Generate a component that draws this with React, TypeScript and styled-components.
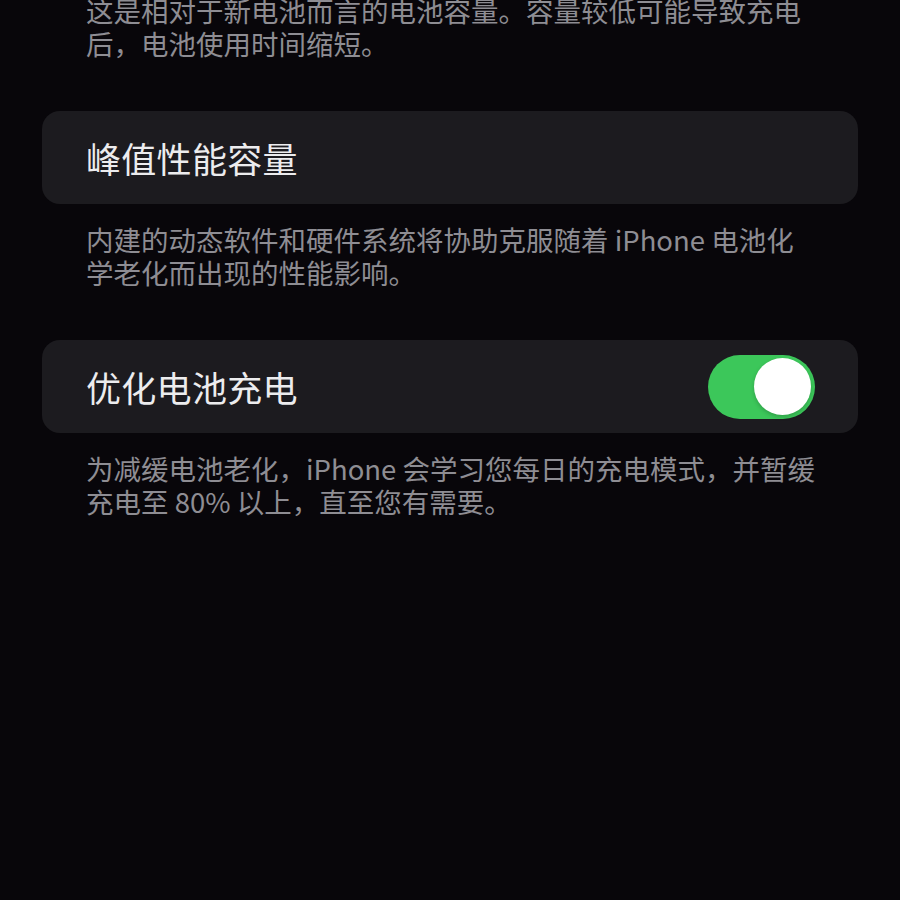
import styled, { createGlobalStyle } from "styled-components";

const GlobalStyle = createGlobalStyle`
  html, body {
    margin: 0;
    padding: 0;
    background: #08060a;
  }
  body {
    font-family: "Noto Sans CJK SC", "Noto Sans", sans-serif;
    width: 900px;
    height: 900px;
    overflow: hidden;
  }
`;

interface SectionProps {
  title?: string;
  toggle?: boolean;
  lines: string[];
}

const sections: SectionProps[] = [
  {
    lines: ["这是相对于新电池而言的电池容量。容量较低可能导致充电", "后，电池使用时间缩短。"],
  },
  {
    title: "峰值性能容量",
    lines: ["内建的动态软件和硬件系统将协助克服随着 iPhone 电池化", "学老化而出现的性能影响。"],
  },
  {
    title: "优化电池充电",
    toggle: true,
    lines: ["为减缓电池老化，iPhone 会学习您每日的充电模式，并暂缓", "充电至 80% 以上，直至您有需要。"],
  },
];

const App = () => {
  return (
    <>
      <GlobalStyle />
      <Page>
        {sections.map((s, i) => (
          <Section key={i} $first={i === 0}>
            {s.title && (
              <Card>
                <CardTitle>{s.title}</CardTitle>
                {s.toggle && (
                  <Switch>
                    <Knob />
                  </Switch>
                )}
              </Card>
            )}
            <Caption>
              {s.lines.map((l) => (
                <Line key={l}>{l}</Line>
              ))}
            </Caption>
          </Section>
        ))}
      </Page>
    </>
  );
};

const Page = styled.div`
  display: flex;
  flex-direction: column;
  gap: 52px;
  padding: 0 42px;
  margin-top: -6px;
`;

const Section = styled.div<{ $first: boolean }>`
  display: flex;
  flex-direction: column;
  gap: 19px;
`;

const Card = styled.div`
  height: 93px;
  border-radius: 18px;
  background: #1c1b1f;
  display: flex;
  align-items: center;
  justify-content: space-between;
  padding: 0 43px 0 44px;
`;

const CardTitle = styled.div`
  font-size: 35px;
  color: #ececee;
  letter-spacing: 0.3px;
`;

const Switch = styled.div`
  width: 107px;
  height: 64px;
  border-radius: 32px;
  background: #3cc75a;
  display: flex;
  align-items: center;
  justify-content: flex-end;
  padding: 0 4px;
  box-sizing: border-box;
`;

const Knob = styled.div`
  width: 57px;
  height: 57px;
  border-radius: 50%;
  background: #ffffff;
  box-shadow: 0 2px 4px rgba(0, 0, 0, 0.2);
`;

const Caption = styled.div`
  padding: 0 44px;
  font-size: 27.5px;
  line-height: 32.5px;
  color: #8e8d93;
`;

const Line = styled.div`
  white-space: nowrap;
`;

export default App;
